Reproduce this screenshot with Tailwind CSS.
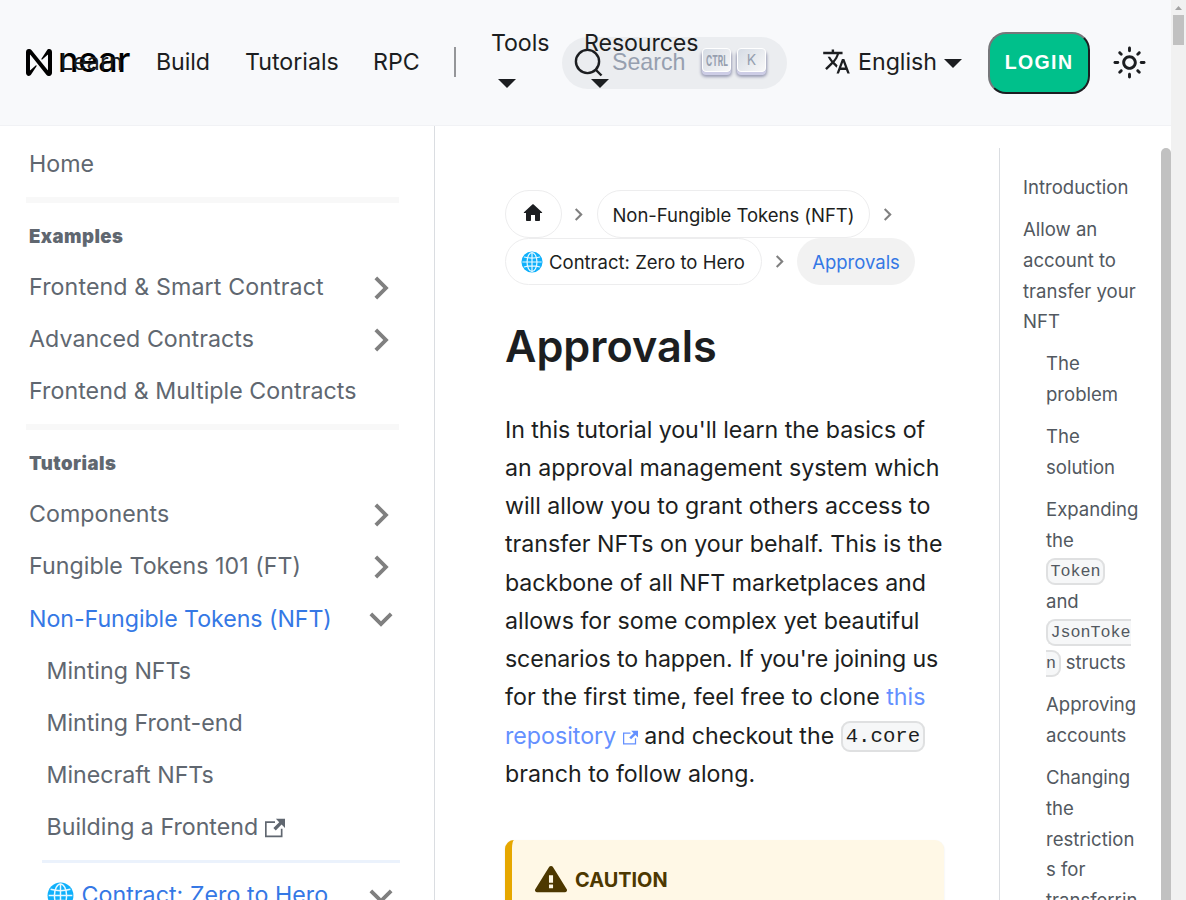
<!DOCTYPE html>
<html lang="en">
<head>
<meta charset="utf-8">
<title>Approvals</title>
<script src="https://cdn.jsdelivr.net/npm/@tailwindcss/browser@4"></script>
</head>
<body class="w-[1186px] h-[900px] overflow-hidden bg-white font-['Inter',sans-serif] text-[23.2px] text-[#1c1e21]">
<svg class="hidden">
  <symbol id="chev" viewBox="0 0 24 24"><path fill="rgb(128,128,128)" d="M8.59 16.59 13.17 12 8.59 7.41 10 6l6 6-6 6z"/></symbol>
  <symbol id="ext" viewBox="0 0 24 24"><path fill="currentColor" d="M21 13v10h-21v-19h12v2h-10v15h17v-8h2zm3-12h-10.988l4.035 4-6.977 7.07 2.828 2.828 6.977-7.07 4.125 4.172v-11z"/></symbol>
  <symbol id="globe" viewBox="0 0 24 24"><circle cx="12" cy="12" r="11.500" fill="#0fb0fb"/><g fill="none" stroke="#e8f8ff" stroke-width="1.300"><ellipse cx="12" cy="12" rx="5.400" ry="10.300"/><path d="M12 1.500v21M1.500 12h21M3.200 6.500q8.800 2.400 17.600 0M3.200 17.500q8.800-2.400 17.600 0"/></g></symbol>
</svg>
<div class="flex w-full h-full">
<div class="w-[1171px] h-full flex flex-col">
  <header class="relative z-10 h-[126px] shrink-0 bg-[#f8f9fb] border-b border-[#f1f2f5] flex items-start pt-[31px] pl-[26px] leading-[38px]">
    <div class="relative flex w-[130px] h-[62px] items-center">
      <svg class="w-[26px] h-[27px] shrink-0" viewBox="0 0 90 90" preserveAspectRatio="none"><path d="M72.200 4.600L53.400 32.500c-1.300 1.900 1.200 4.200 3 2.600L74.900 19c.5-.4 1.200-.1 1.200.6v50.300c0 .7-.9 1-1.300.5l-56-67C17 1.200 14.400 0 11.500 0h-2C4.300 0 0 4.300 0 9.600v70.800C0 85.700 4.300 90 9.600 90c3.300 0 6.400-1.700 8.100-4.600l18.800-27.900c1.300-1.900-1.200-4.200-3-2.600l-18.500 16.100c-.5.4-1.200.1-1.200-.6V20c0-.7.9-1 1.300-.5l56 67c1.800 2.200 4.500 3.400 7.300 3.400h2c5.300 0 9.600-4.300 9.600-9.600V9.600C90 4.300 85.700 0 80.400 0 77 0 73.900 1.700 72.200 4.600z"/></svg>
      <span class="absolute left-[32px] top-[10px] text-[34px] leading-[38px] font-medium text-black tracking-[-0.300px]">near</span>
      <span class="absolute left-[34px] top-[12px]">Learn</span>
    </div>
    <span class="w-[89px] pt-3 tracking-[-0.100px]">Build</span>
    <span class="w-[128px] pt-3">Tutorials</span>
    <span class="w-[81px] pt-3">RPC</span>
    <span class="w-[2px] h-[30px] mt-[16px] bg-[#959699]"></span>
    <div class="w-[106px] pl-[35px] -mt-[7px] whitespace-nowrap flex flex-col"><span class="tracking-[-0.100px]">Tools</span><svg class="w-[18px] h-[9px] ml-[7px] mt-[17px]" viewBox="0 0 18 9"><path fill="#1c1e21" d="M0 0h18L9 9z"/></svg></div>
    <div class="relative w-[225px] h-[52px] mt-[6px] rounded-full bg-[#ebedf0]">
      <span class="absolute left-[22px] -top-[13px] tracking-[-0.100px]">Resources</span>
      <svg class="absolute left-[29px] top-[42px] w-[18px] h-[9px]" viewBox="0 0 18 9"><path fill="#1c1e21" d="M0 0h18L9 9z"/></svg>
      <svg class="absolute left-[12px] top-[11px] w-[29px] h-[29px]" viewBox="0 0 29 29" fill="none" stroke="#1c1e21" stroke-width="2.400"><circle cx="13.500" cy="13.500" r="11.600"/><path d="m21.500 21.500 6 6"/></svg>
      <span class="absolute left-[50px] top-[6px] text-[#969faf] font-['Liberation_Sans',sans-serif] text-[23.200px]">Search</span>
      <span class="absolute left-[140px] top-[11px] w-[29px] h-[24px] rounded-[4px] bg-linear-[-225deg] from-[#d5dbe4] to-[#f8f8f8] border border-white shadow-[0_3px_0_#cdcde6,0_4px_3px_1px_rgba(30,35,90,0.4)] flex items-center justify-center"><svg class="w-[24px] h-[14px]" viewBox="0 0 24 14"><text x="1" y="12.500" font-size="15" font-weight="700" fill="#969faf" textLength="22" lengthAdjust="spacingAndGlyphs">CTRL</text></svg></span>
      <span class="absolute left-[175px] top-[11px] w-[29px] h-[24px] rounded-[4px] bg-linear-[-225deg] from-[#d5dbe4] to-[#f8f8f8] border border-white shadow-[0_3px_0_#cdcde6,0_4px_3px_1px_rgba(30,35,90,0.4)] flex items-center justify-center text-[14px] text-[#969faf]">K</span>
    </div>
    <svg class="w-[29px] h-[29px] ml-[35px] mt-[16px]" viewBox="0 0 24 24" fill="#1c1e21"><path d="M12.870 15.070l-2.540-2.510.03-.03c1.740-1.940 2.980-4.170 3.710-6.530H17V4h-7V2H8v2H1v1.990h11.170C11.500 7.920 10.440 9.750 9 11.350 8.070 10.320 7.300 9.190 6.690 8h-2c.73 1.630 1.730 3.170 2.980 4.560l-5.090 5.020L4 19l5-5 3.110 3.110.76-2.040zM18.500 10h-2L12 22h2l1.120-3h4.750L21 22h2l-4.500-12zm-2.620 7l1.620-4.330L19.120 17h-3.240z"/></svg>
    <span class="ml-[7px] w-[86px] pt-3">English</span>
    <svg class="w-[18px] h-[9px] mt-[28px]" viewBox="0 0 18 9"><path fill="#1c1e21" d="M0 0h18L9 9z"/></svg>
    <button class="ml-[26px] mt-px w-[102px] h-[62px] pb-[2px] rounded-[18px] border-2 [border-style:solid] border-[#1c1e21] border-t-[#76777a] border-l-[#76777a] bg-[#00c08b] text-white font-['Liberation_Sans',sans-serif] font-bold text-[19.500px] tracking-[1.400px]">LOGIN</button>
    <svg class="ml-[22px] mt-[14px] w-[35px] h-[35px]" viewBox="0 0 24 24" fill="#1c1e21"><path d="M12,9c1.650,0,3,1.350,3,3s-1.350,3-3,3s-3-1.350-3-3S10.350,9,12,9 M12,7c-2.760,0-5,2.240-5,5s2.240,5,5,5s5-2.240,5-5 S14.760,7,12,7L12,7z M2,13l2,0c0.550,0,1-0.450,1-1s-0.450-1-1-1l-2,0c-0.550,0-1,0.450-1,1S1.450,13,2,13z M20,13l2,0c0.550,0,1-0.450,1-1 s-0.450-1-1-1l-2,0c-0.550,0-1,0.450-1,1S19.450,13,20,13z M11,2v2c0,0.550,0.450,1,1,1s1-0.450,1-1V2c0-0.550-0.450-1-1-1S11,1.450,11,2z M11,20v2c0,0.550,0.450,1,1,1s1-0.450,1-1v-2c0-0.550-0.450-1-1-1C11.450,19,11,19.450,11,20z M5.990,4.580c-0.390-0.390-1.030-0.390-1.410,0 c-0.390,0.390-0.390,1.030,0,1.410l1.060,1.060c0.390,0.390,1.030,0.390,1.410,0s0.390-1.030,0-1.410L5.990,4.580z M18.360,16.950 c-0.390-0.390-1.030-0.390-1.410,0c-0.390,0.390-0.390,1.030,0,1.410l1.060,1.060c0.390,0.390,1.030,0.390,1.410,0c0.390-0.390,0.390-1.030,0-1.410 L18.360,16.950z M19.420,5.990c0.390-0.390,0.390-1.030,0-1.410c-0.390-0.390-1.030-0.390-1.410,0l-1.060,1.060c-0.390,0.390-0.390,1.030,0,1.410 s1.030,0.390,1.410,0L19.420,5.990z M7.050,18.360c0.390-0.390,0.390-1.030,0-1.410c-0.390-0.390-1.030-0.390-1.410,0l-1.060,1.060 c-0.390,0.390-0.390,1.030,0,1.410s1.030,0.390,1.410,0L7.050,18.360z"/></svg>
  </header>
  <div class="flex h-[774px] overflow-hidden">
    <nav class="w-[435px] shrink-0 border-r border-[#dadde1] pt-[12px] pl-[29px] pr-[34px] text-[#606770] tracking-[0.050px] whitespace-nowrap">
      <div class="h-[52px] leading-[52px]">Home</div>
      <div class="h-[6px] mt-[7px] -ml-[3px] w-[373px] bg-[#f8f8f8]"></div>
      <div class="h-[58px] leading-[66px] text-[18.560px] font-black tracking-[0.450px]">Examples</div>
      <div class="h-[52px] leading-[52px] flex items-center justify-between"><span class="tracking-[0.120px]">Frontend &amp; Smart Contract</span><svg class="w-[46px] h-[46px] mt-px -mr-[4px]"><use href="#chev"/></svg></div>
      <div class="h-[52px] leading-[52px] flex items-center justify-between"><span>Advanced Contracts</span><svg class="w-[46px] h-[46px] mt-px -mr-[4px]"><use href="#chev"/></svg></div>
      <div class="h-[52px] leading-[52px]">Frontend &amp; Multiple Contracts</div>
      <div class="h-[6px] mt-[7px] -ml-[3px] w-[373px] bg-[#f8f8f8]"></div>
      <div class="h-[58px] leading-[66px] text-[18.560px] font-black tracking-[0.450px]">Tutorials</div>
      <div class="h-[52px] leading-[52px] flex items-center justify-between"><span>Components</span><svg class="w-[46px] h-[46px] mt-px -mr-[4px]"><use href="#chev"/></svg></div>
      <div class="h-[52px] leading-[52px] flex items-center justify-between"><span>Fungible Tokens 101 (FT)</span><svg class="w-[46px] h-[46px] mt-px -mr-[4px]"><use href="#chev"/></svg></div>
      <div class="h-[53px] leading-[54px] flex items-center justify-between text-[#3578e5]"><span class="tracking-[-0.050px]">Non-Fungible Tokens (NFT)</span><svg class="w-[46px] h-[46px] mt-px -mr-[4px] rotate-90"><use href="#chev"/></svg></div>
      <div class="pl-[17.500px] tracking-normal">
        <div class="h-[52px] leading-[52px]">Minting NFTs</div>
        <div class="h-[52px] leading-[52px]">Minting Front-end</div>
        <div class="h-[52px] leading-[52px]">Minecraft NFTs</div>
        <div class="h-[52px] leading-[52px] flex items-center gap-[7px]"><span>Building a Frontend</span><svg class="w-[20px] h-[20px] mt-[2px]"><use href="#ext"/></svg></div>
        <div class="h-[3px] mt-[7px] -ml-[4.500px] w-[358px] bg-[#ebf2fc]"></div>
        <div class="h-[52px] mt-[6px] leading-[52px] flex items-center justify-between text-[#3578e5]"><span class="flex items-center gap-[8px] tracking-[0.050px]"><svg class="w-[27px] h-[27px]"><use href="#globe"/></svg>Contract: Zero to Hero</span><svg class="w-[46px] h-[46px] mt-px -mr-[4px] rotate-90"><use href="#chev"/></svg></div>
      </div>
    </nav>
    <main class="w-[564px] shrink-0 pl-[70px] pt-[64px] whitespace-nowrap">
      <div class="text-[18.500px] leading-[30px]">
        <div class="flex items-center h-[48px]">
          <span class="w-[57px] h-[48px] rounded-full border border-[#ededee] flex items-center justify-center"><svg class="w-[24px] h-[24px] -mt-[3px] -ml-[2px]" viewBox="0 0 24 24"><path fill="#1c1e21" d="M10 19v-5h4v5c0 .55.45 1 1 1h3c.55 0 1-.45 1-1v-7h1.700c.46 0 .68-.57.33-.87L12.670 3.600c-.38-.34-.96-.34-1.340 0l-8.360 7.530c-.34.3-.13.87.33.87H5v7c0 .55.45 1 1 1h3c.55 0 1-.45 1-1z"/></svg></span>
          <svg class="w-[25px] h-[25px] ml-[4px] mr-[6px] mt-px"><use href="#chev"/></svg>
          <span class="w-[273px] h-[48px] rounded-full border border-[#ededee] flex items-center justify-center tracking-[-0.020px] pt-px">Non-Fungible Tokens (NFT)</span>
          <svg class="w-[25px] h-[25px] ml-[5px] mr-[5px] mt-px"><use href="#chev"/></svg>
        </div>
        <div class="flex items-center h-[47px]">
          <span class="w-[257px] h-[47px] rounded-full border border-[#ededee] flex items-center justify-center gap-[6px] pr-px"><svg class="w-[22px] h-[22px]"><use href="#globe"/></svg>Contract: Zero to Hero</span>
          <svg class="w-[25px] h-[25px] ml-[5px] mr-[5px]"><use href="#chev"/></svg>
          <span class="w-[118px] h-[47px] rounded-full bg-[#f2f2f2] text-[#3578e5] flex items-center justify-center">Approvals</span>
        </div>
      </div>
      <h1 class="mt-[32px] text-[43.200px] leading-[58px] font-semibold">Approvals</h1>
      <p class="mt-[35.500px] leading-[38.280px]"><span class="tracking-[-0.050px]">In this tutorial you'll learn the basics of</span><br>an approval management system which<br>will allow you to grant others access to<br>transfer NFTs on your behalf. This is the<br><span class="tracking-[-0.050px]">backbone of all NFT marketplaces and</span><br>allows for some complex yet beautiful<br><span class="tracking-[-0.120px]">scenarios to happen. If you're joining us</span><br><span class="tracking-[0.040px]">for the first time, feel free to clone</span> <span class="text-[#6490ff]">this<br>repository <svg class="inline w-[15px] h-[15px] align-[-1px]"><use href="#ext"/></svg></span> and checkout the <code class="font-['Liberation_Mono',monospace] text-[20.700px] leading-[26px] bg-[#f6f7f8] border-2 border-[#dfe0e1] rounded-[9px] px-[3px] pt-[2px] pb-[2px] align-[2px]">4.core</code><br>branch to follow along.</p>
      <div class="mt-[47px] w-[439px] h-[200px] rounded-[9px] border-l-[7px] border-[#e6a700] bg-[#fff8e6] shadow-[0_1px_2px_rgba(0,0,0,0.1)] pt-[23px] pl-[23px]">
        <div class="flex items-center gap-[8px] h-[34px] text-[#4d3800] font-bold text-[19.900px]"><svg class="w-[32px] h-[30px] mt-[-2px]" viewBox="0 0 16 16" preserveAspectRatio="none"><path fill="#4d3800" fill-rule="evenodd" d="M8.893 1.500c-.183-.31-.52-.5-.887-.5s-.703.19-.886.500L.138 13.499a.98.98 0 0 0 0 1.001c.193.31.53.501.886.501h13.964c.367 0 .704-.19.877-.5a1.030 1.030 0 0 0 .01-1.002L8.893 1.500zm.133 11.497H6.987v-2.003h2.039v2.003zm0-3.004H6.987V5.987h2.039v4.006z"/></svg><span class="pt-[2px]">CAUTION</span></div>
      </div>
    </main>
    <aside class="flex mt-[22px] w-[172px] border-l border-[#dadde1]">
      <ul class="w-[161px] shrink-0 pt-[24.100px] pl-[23px] text-[18.560px] leading-[30.620px] text-[#525860] whitespace-nowrap flex flex-col gap-[11.600px]">
        <li>Introduction</li>
        <li>Allow an<br>account to<br>transfer your<br>NFT</li>
        <li class="pl-[23px]">The<br>problem</li>
        <li class="pl-[23px]">The<br>solution</li>
        <li class="pl-[23px]">Expanding<br>the<br><code class="font-['Liberation_Mono',monospace] text-[16.700px] leading-[20px] bg-[#f6f7f8] border-2 border-[#dfe0e1] rounded-[9px] px-[2.500px] py-[2px] align-[1.500px]">Token</code><br>and<br><code class="font-['Liberation_Mono',monospace] text-[16.700px] leading-[20px] bg-[#f6f7f8] border-2 border-[#dfe0e1] rounded-[9px] px-[2.500px] py-[2px] align-[1.500px]">JsonToke<br>n</code> structs</li>
        <li class="pl-[23px]">Approving<br>accounts</li>
        <li class="pl-[23px]">Changing<br>the<br>restriction<br>s for<br>transferrin<br>g</li>
      </ul>
      <div class="w-[10px] h-[900px] rounded-full bg-[#c1c1c1]"></div>
    </aside>
  </div>
</div>
<div class="w-[15px] h-full bg-[#f1f1f1] flex flex-col items-center">
  <svg class="w-[15px] h-[15px] shrink-0" viewBox="0 0 15 15"><path fill="#a3a3a3" d="M4 10h7L7.500 6z"/></svg>
  <div class="w-[11px] h-[30px] bg-[#c1c1c1]"></div>
</div>
</div>
</body>
</html>
